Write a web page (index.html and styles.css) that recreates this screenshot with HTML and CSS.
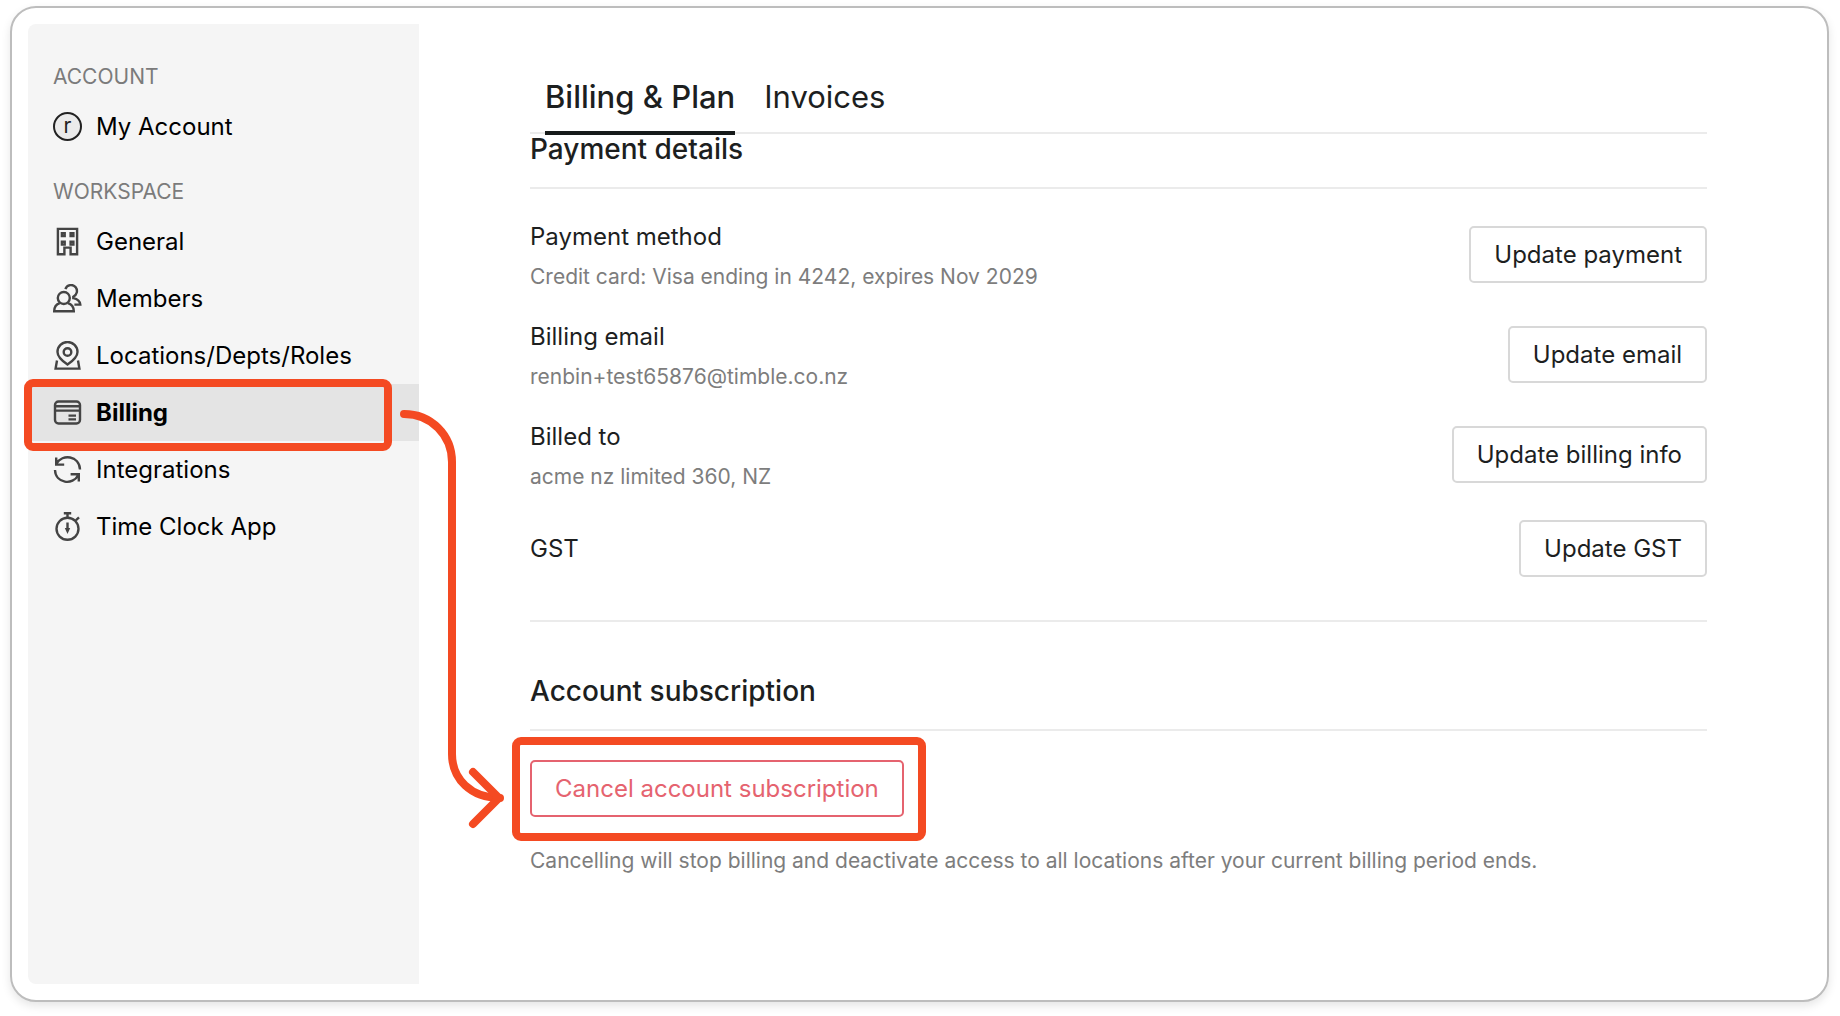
FILE: index.html
```html
<!DOCTYPE html>
<html lang="en">
  <head>
    <meta charset="UTF-8"/>
    <title>Billing &amp; Plan</title>
    <link rel="stylesheet" href="styles.css">
  </head>
  <body>
    <div class="frame">
      <nav class="sidebar">
        <h2 class="nav-label">ACCOUNT</h2>
        <ul class="nav-list">
          <li><a class="nav-item" href="#account"><span class="avatar">r</span>My Account</a></li>
        </ul>

        <h2 class="nav-label">WORKSPACE</h2>
        <ul class="nav-list">
          <li>
            <a class="nav-item" href="#general">
              <svg class="icon" viewBox="0 0 29 29">
                <path d="M4.9 1.9H24.1V27.2H17.6V20.6H11.4V27.2H4.9Z"/>
                <path d="M8.9 6.2h2.8V9h-2.8zM17.6 6.2h2.8V9h-2.8zM8.9 14.8h2.8v2.8h-2.8zM17.6 14.8h2.8v2.8h-2.8z"/>
              </svg>
              General
            </a>
          </li>
          <li>
            <a class="nav-item" href="#members">
              <svg class="icon" viewBox="0 0 29 29">
                <circle cx="10.8" cy="14" r="6"/>
                <path d="M6.8 19.2C3.4 20.3 1.2 23 1.2 27.3H20.8C20.8 23 18.4 20.3 14.8 19.2"/>
                <path d="M12.4 5.2C14 .4 20-.2 22.7 3.3C25 6.4 24 10.8 20.3 12.8V14.2C24.8 15.2 27 17.6 27.3 20.6H21.4"/>
              </svg>
              Members
            </a>
          </li>
          <li>
            <a class="nav-item" href="#locations">
              <svg class="icon" viewBox="0 0 29 29">
                <path d="M14.5 23.6C10 20.5 4.5 16 4.5 11A10 10 0 0 1 24.5 11C24.5 16 19 20.5 14.5 23.6Z"/>
                <circle cx="14.5" cy="11" r="3.8"/>
                <path d="M4 19.5L2.6 27.6H26.4L25 19.5"/>
              </svg>
              Locations/Depts/Roles
            </a>
          </li>
          <li>
            <a class="nav-item nav-item-active" href="#billing">
              <svg class="icon" viewBox="0 0 29 29">
                <rect x="2" y="3.5" width="25" height="22" rx="3.5"/>
                <path d="M2 8.2H27M2 12.6H27M15.5 17.6H23M15.5 21.4H23"/>
              </svg>
              Billing
            </a>
          </li>
          <li>
            <a class="nav-item" href="#integrations">
              <svg class="icon" viewBox="0 0 29 29">
                <path d="M3.6 8.5C9-1.5 26.5.5 27 14.5M3.2 2.5V9.6H11.2"/>
                <path d="M2 15C2.5 28.5 20 30.8 25.3 20M17.6 19.2H25.8V26.4"/>
              </svg>
              Integrations
            </a>
          </li>
          <li>
            <a class="nav-item" href="#clock">
              <svg class="icon" viewBox="0 0 29 29">
                <circle cx="14.5" cy="16.8" r="11"/>
                <path d="M14.5 1V5.6M10.8 1.2H18.2M22.8 8.4L26 5.4M14.5 10.5V18"/>
                <path class="icon-solid" d="M11.8 16H17.2L14.5 22Z"/>
              </svg>
              Time Clock App
            </a>
          </li>
        </ul>
      </nav>

      <main class="content">
        <div class="tabs">
          <a class="tab tab-active" href="#plan">Billing &amp; Plan</a>
          <a class="tab" href="#invoices">Invoices</a>
        </div>

        <section class="details">
          <h2 class="section-title">Payment details</h2>
          <div class="rows">
            <div class="row">
              <div>
                <h3 class="row-title">Payment method</h3>
                <p class="row-text">Credit card: Visa ending in 4242, expires Nov 2029</p>
              </div>
              <button class="btn" type="button">Update payment</button>
            </div>
            <div class="row">
              <div>
                <h3 class="row-title">Billing email</h3>
                <p class="row-text">renbin+test65876@timble.co.nz</p>
              </div>
              <button class="btn" type="button">Update email</button>
            </div>
            <div class="row">
              <div>
                <h3 class="row-title">Billed to</h3>
                <p class="row-text">acme nz limited 360, NZ</p>
              </div>
              <button class="btn" type="button">Update billing info</button>
            </div>
            <div class="row">
              <h3 class="row-title">GST</h3>
              <button class="btn" type="button">Update GST</button>
            </div>
          </div>
        </section>

        <section class="subscription">
          <h2 class="section-title">Account subscription</h2>
          <button class="btn btn-danger" type="button">Cancel account subscription</button>
          <p class="note">Cancelling will stop billing and deactivate access to all locations after your current billing period ends.</p>
        </section>
      </main>

      <!-- arrow from the Billing item to the cancel button -->
      <svg class="arrow" width="112" height="428" viewBox="0 0 112 428">
        <path d="M8 8C35 8 56 29 56 56V348C56 373 75 392 104 392"/>
        <path d="M77 366L103 392L77 418"/>
      </svg>
    </div>
  </body>
</html>
```
FILE: styles.css
```css
* { box-sizing: border-box; }
body {
    margin: 0;
    padding: 6px 11px 14px 10px;
    min-height: 100vh;
    display: flex;
    background: #fff;
    color: #1d1f1f;
    font-family: Inter, "Liberation Sans", sans-serif;
    font-size: 24px;
}
h2, h3, p, ul { margin: 0; padding: 0; font-weight: 400; }
ul { list-style: none; }
a { color: inherit; text-decoration: none; }

.frame {
    position: relative;
    flex: 1;
    display: flex;
    padding: 16px;
    border: 2px solid #bdbdbd;
    border-radius: 26px;
    box-shadow: 0 4px 10px rgba(0, 0, 0, 0.1);
}

/* sidebar */
.sidebar {
    flex: 0 0 391px;
    padding-top: 41px;
    background: #f5f5f5;
    border-radius: 8px 0 0 8px;
}
.nav-label {
    padding-left: 25px;
    margin-bottom: 9px;
    color: #7b7b7b;
    font-size: 21px;
    line-height: 24px;
}
.nav-list { margin-bottom: 25px; }
.nav-item {
    position: relative;
    display: flex;
    align-items: center;
    gap: 14px;
    height: 57px;
    padding-left: 25px;
    color: #000;
}
.nav-item-active {
    background: #e4e4e4;
    font-weight: 700;
}
.nav-item-active::after {
    content: "";
    position: absolute;
    top: -5px;
    right: 27px;
    bottom: -10px;
    left: -4px;
    border: 8px solid #f44a22;
    border-radius: 9px;
}
.avatar {
    width: 29px;
    height: 29px;
    border: 2px solid #222;
    border-radius: 50%;
    background: #ebebeb;
    color: #222;
    font-size: 21px;
    line-height: 24px;
    text-align: center;
}
.icon {
    width: 29px;
    height: 29px;
    fill: none;
    stroke: #444;
    stroke-width: 2.4;
}
.icon-solid { fill: #444; stroke: none; }

/* billing page */
.content {
    flex: 1;
    padding: 53px 104px 0 111px;
}
.tabs {
    display: flex;
    gap: 29px;
    padding-left: 15px;
    border-bottom: 2px solid #ebebeb;
    font-size: 31px;
    line-height: 40px;
}
.tab {
    padding-bottom: 14px;
    margin-bottom: -3px;
    border-bottom: 4px solid transparent;
}
.tab-active {
    border-color: #161a1a;
    font-weight: 500;
}
.section-title {
    padding-bottom: 23px;
    border-bottom: 2px solid #ebebeb;
    font-size: 28px;
    font-weight: 500;
    line-height: 30px;
}
.rows {
    display: flex;
    flex-direction: column;
    gap: 31px;
    padding: 31px 0 43px;
    border-bottom: 2px solid #ebebeb;
}
.row {
    display: flex;
    align-items: center;
    justify-content: space-between;
}
.row-title {
    font-size: 24px;
    line-height: 34px;
}
.row-text, .note {
    color: #7d7d7d;
    font-size: 21px;
    line-height: 24px;
}
.row-text { margin-top: 11px; }
.btn {
    height: 57px;
    padding: 0 23px;
    border: 2px solid #d8d8d8;
    border-radius: 5px;
    background: #fff;
    color: inherit;
    font: inherit;
}
.subscription { padding-top: 54px; }
.btn-danger {
    position: relative;
    display: block;
    margin: 29px 0 32px;
    border-color: #e5636f;
    color: #e5636f;
}
.btn-danger::after {
    content: "";
    position: absolute;
    top: -25px;
    right: -24px;
    bottom: -26px;
    left: -20px;
    border: 8px solid #f44a22;
    border-radius: 9px;
}

.arrow {
    position: absolute;
    top: 398px;
    left: 384px;
    fill: none;
    stroke: #f44a22;
    stroke-width: 8;
    stroke-linecap: round;
    stroke-linejoin: round;
}
```
